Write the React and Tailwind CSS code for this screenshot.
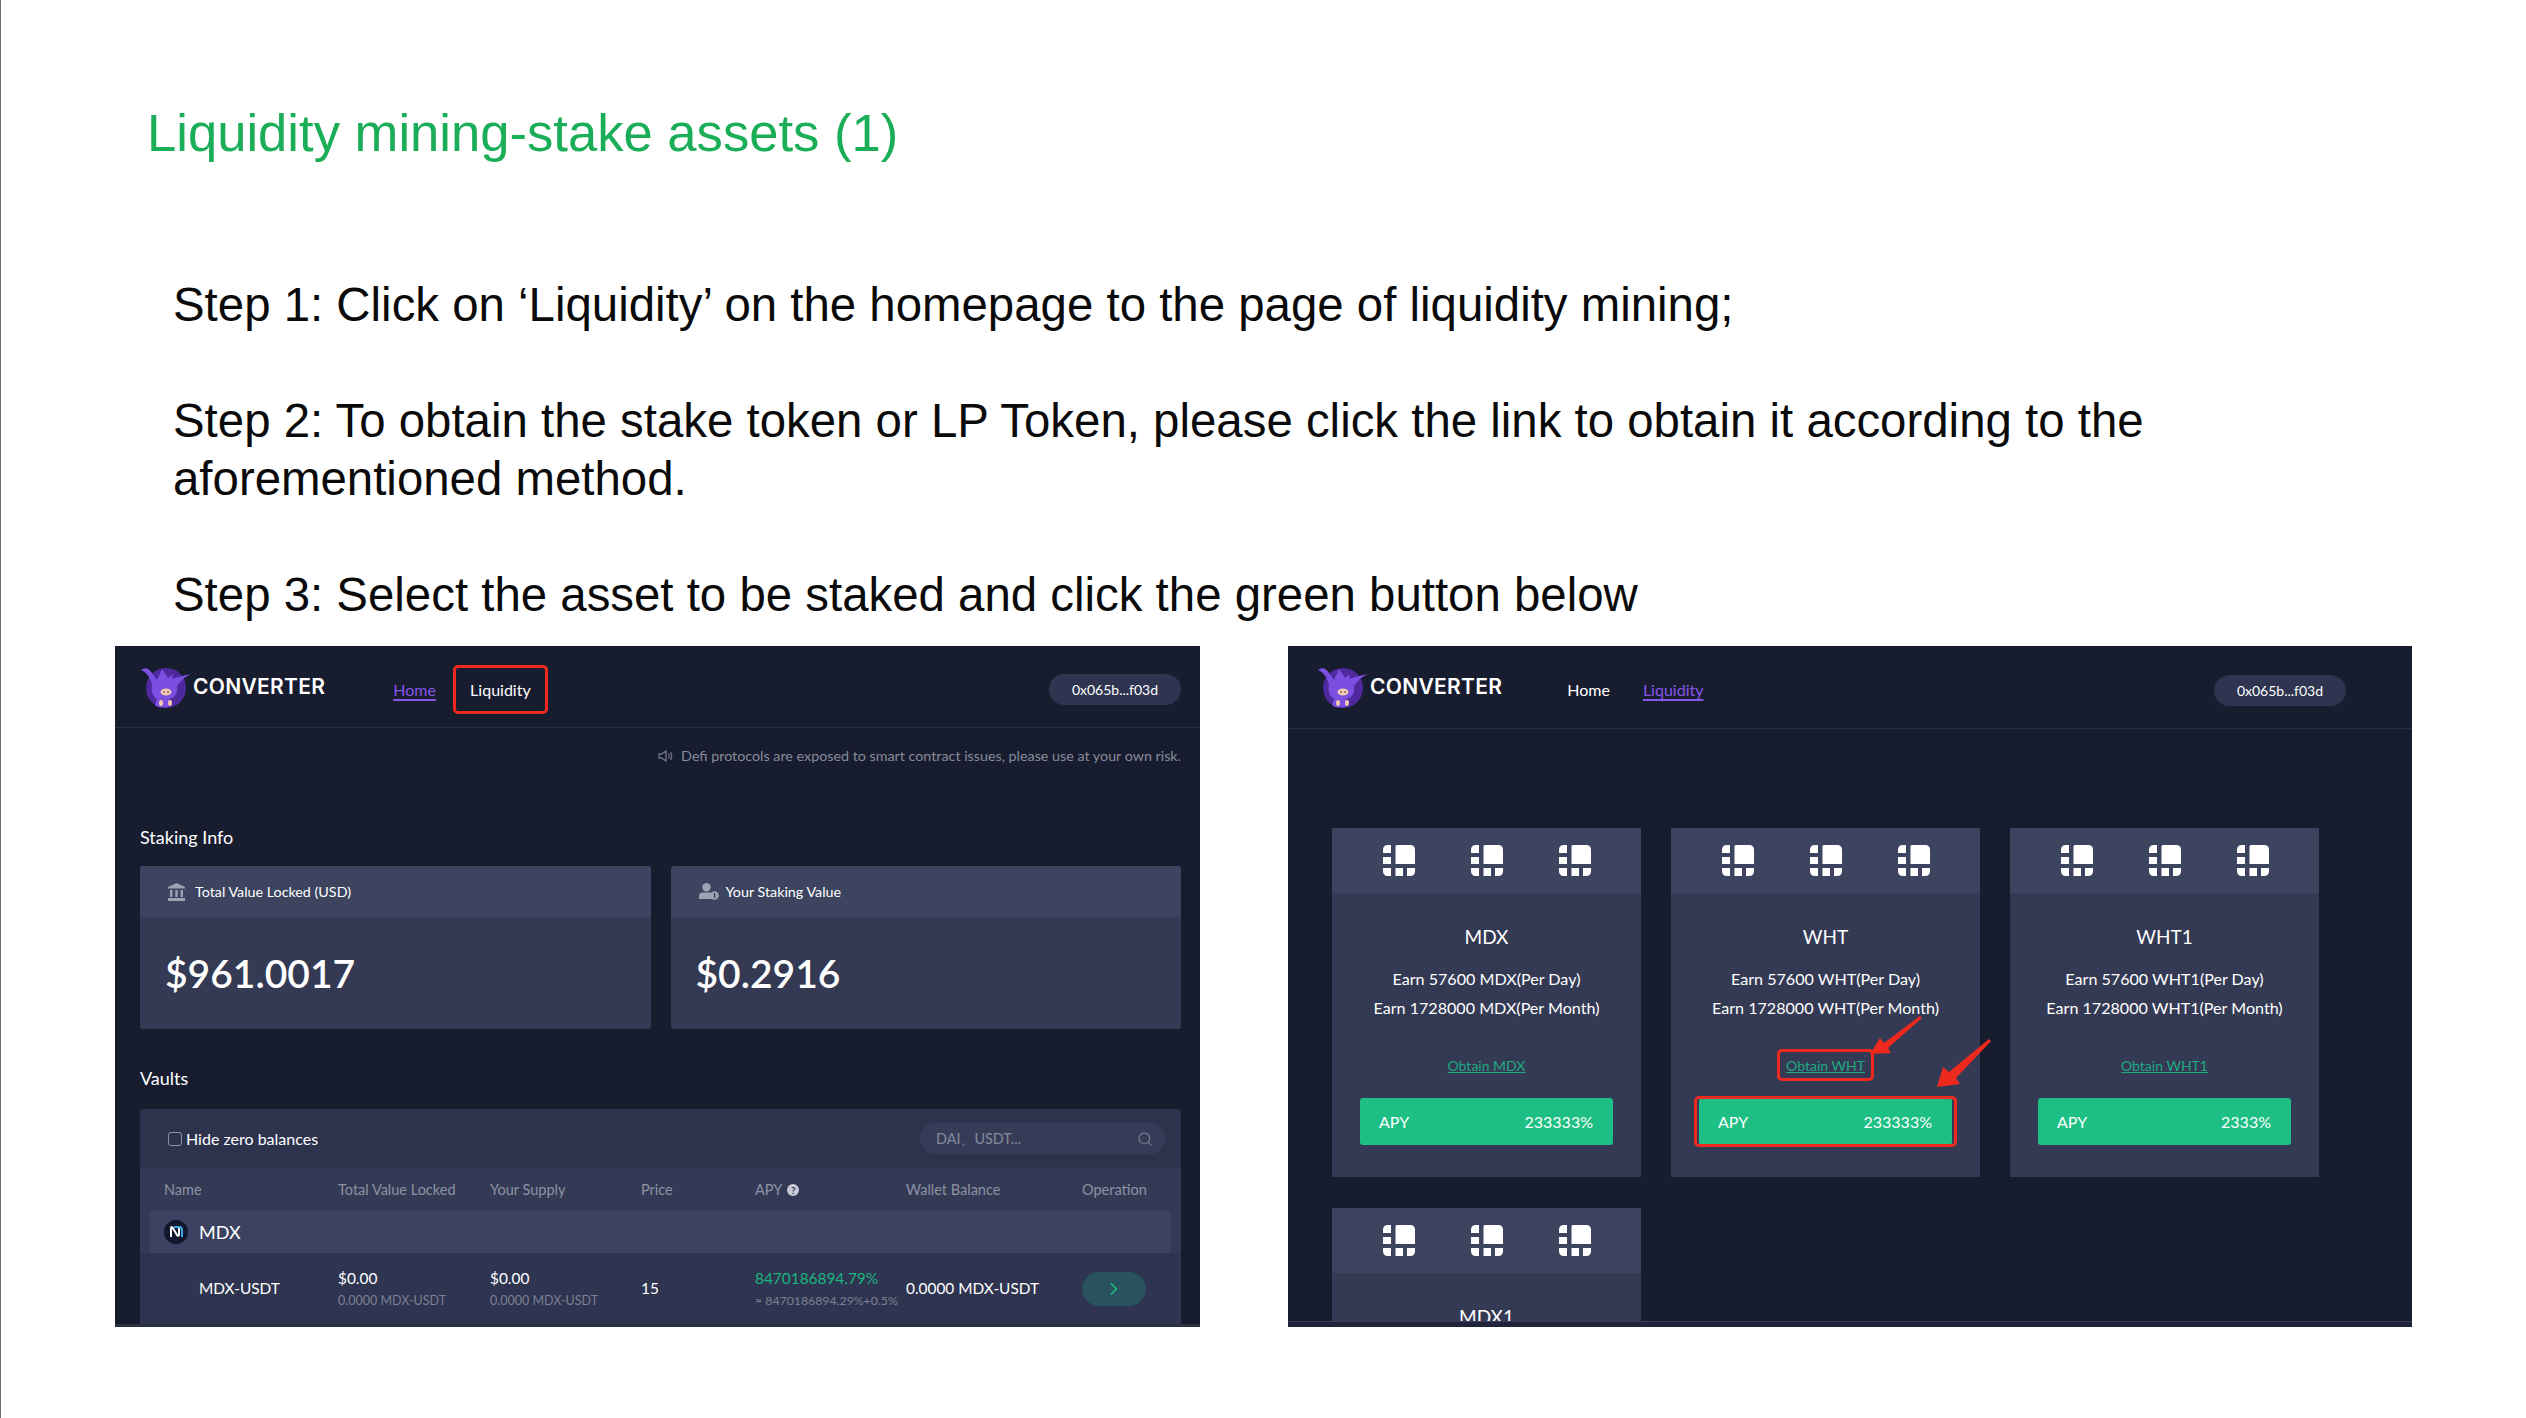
import { ChevronRight, Search } from "lucide-react";

const panelFont = { fontFamily: "Lato, sans-serif" };

// little pig mascot next to the CONVERTER wordmark
const PigLogo = () => (
    <svg width="52" height="41" viewBox="0 0 52 41" className="flex-shrink-0">
        <ellipse cx="26" cy="21" rx="20" ry="20" fill="#4f2a9e" />
        <path d="M1 3 C5 0 9 1 12 6 L17 13 C19 8 21 5 22 2 C24 5 26 7 28 11 L33 7 L32 12 C38 10 45 8 51 7 C46 9 41 13 37 19 C38 26 35 31 29 32 L31 37 C29 41 25 41 23 40 C20 41 17 40 15 38 L17 32 C12 29 11 23 12 17 C10 10 6 5 1 3 Z" fill="#7b4fe0" />
        <ellipse cx="26" cy="25" rx="5.5" ry="3.5" fill="#f0c9b0" />
        <circle cx="24" cy="25" r="0.9" fill="#8a5a60" />
        <circle cx="28" cy="25" r="0.9" fill="#8a5a60" />
        <ellipse cx="21" cy="36" rx="2" ry="3" fill="#f0c9b0" />
        <ellipse cx="30" cy="36" rx="2" ry="3" fill="#f0c9b0" />
    </svg>
);

const BlockIcon = () => (
    <svg width="32" height="31" viewBox="0 0 32 31" fill="#ffffff">
        <path d="M12.5 1.5 Q12.5 0 14 0 H27 Q32 0 32 5 V19 H12.5 Z" />
        <path d="M0 8 V5 Q0 0 5 0 H8 V8 Z" />
        <rect x="0" y="12" width="8" height="7" />
        <path d="M0 23 H8 V31 H5 Q0 31 0 26 Z" />
        <rect x="12.5" y="23" width="7.5" height="8" />
        <path d="M24 23 H32 V26 Q32 31 27 31 H24 Z" />
    </svg>
);

const BankIcon = () => (
    <svg width="17" height="18" viewBox="0 0 17 18" fill="#9ea2b3">
        <path d="M8.5 0 L17 4 V5.5 H0 V4 Z" />
        <rect x="2" y="7" width="2.4" height="7" />
        <rect x="7.3" y="7" width="2.4" height="7" />
        <rect x="12.6" y="7" width="2.4" height="7" />
        <rect x="0" y="15" width="17" height="3" />
    </svg>
);

const UserCoinIcon = () => (
    <svg width="20" height="17" viewBox="0 0 20 17" className="-mr-[3px]">
        <circle cx="7.5" cy="4.2" r="4.2" fill="#9ea2b3" />
        <path d="M0 16 V13 Q0 9.5 4 9.5 H11 Q13 9.5 13 12 V16 Z" fill="#9ea2b3" />
        <circle cx="15.5" cy="12.5" r="4.3" fill="#9ea2b3" />
        <rect x="15" y="10" width="1.2" height="5" fill="#343a54" />
    </svg>
);

const SpeakerIcon = () => (
    <svg width="15" height="12" viewBox="0 0 15 12" fill="none" stroke="#6f7484" strokeWidth="1.3">
        <path d="M1 4 H3.5 L8 1 V11 L3.5 8 H1 Z" />
        <path d="M10.5 3.5 Q12 6 10.5 8.5" />
        <path d="M12.5 2 Q14.8 6 12.5 10" />
    </svg>
);

const MdxIcon = () => (
    <svg width="24" height="24" viewBox="0 0 24 24" fill="none">
        <circle cx="12" cy="12" r="12" fill="#12172e" />
        <path d="M7 17 V8 Q7 6.5 8.5 7.5 L13 15 Q14 16.5 15 15 L15 8" stroke="#ffffff" strokeWidth="2" />
        <path d="M10 7 H15 Q18 7 18 10 V17" stroke="#3ea6e0" strokeWidth="2" />
    </svg>
);

const Logo = () => (
    <div className="flex items-center -mt-[5px]">
        <PigLogo />
        <span
            className="ml-[1px] -mt-[2px] text-[21px] leading-none font-semibold text-white tracking-[0.3px]"
            style={{ fontFamily: "Inter, sans-serif" }}
        >
            CONVERTER
        </span>
    </div>
);

const WalletPill = () => (
    <div className="w-[132px] h-[31px] rounded-full bg-[#2f3550] flex items-center justify-center text-[14px] text-white">
        0x065b...f03d
    </div>
);

const StatCard = ({ icon, label, value }) => (
    <div className="flex-1 h-[163px] rounded-[3px] overflow-hidden bg-[#343a54]">
        <div className="h-[51px] bg-[#3c4460] pl-[28px] flex items-center gap-[10px] text-[14.3px] text-white">
            {icon}
            <span>{label}</span>
        </div>
        <div className="h-[112px] pl-[25px] flex items-center text-[39px] font-semibold text-white">{value}</div>
    </div>
);

function LeftPanel() {
    return (
        <div className="relative w-[1085px] h-[681px] overflow-hidden bg-[#171c2f]" style={panelFont}>
            {/* Nav */}
            <div className="h-[82px] pt-[6px] border-b border-[#2a3044] pl-[25px] pr-[19px] flex items-center">
                <Logo />
                <a className="ml-[68px] text-[16px] text-[#8656e8] underline decoration-2 underline-offset-[3px]">Home</a>
                <div className="ml-[17px] w-[95px] h-[49px] border-[3px] border-[#ee2a1f] rounded-[5px] flex items-center justify-center text-[16px] text-white">
                    Liquidity
                </div>
                <div className="ml-auto">
                    <WalletPill />
                </div>
            </div>

            <div className="pl-[25px] pr-[19px]">
                <div className="mt-[18px] flex items-center justify-end gap-[8px] text-[14.3px] leading-[20px] text-[#878b99]">
                    <SpeakerIcon />
                    <span>Defi protocols are exposed to smart contract issues, please use at your own risk.</span>
                </div>

                <h2 className="mt-[60px] text-[18px] leading-[22px] text-white">Staking Info</h2>
                <div className="mt-[18px] flex gap-[20px]">
                    <StatCard icon={<BankIcon />} label="Total Value Locked (USD)" value="$961.0017" />
                    <StatCard icon={<UserCoinIcon />} label="Your Staking Value" value="$0.2916" />
                </div>

                <h2 className="mt-[38px] text-[18px] leading-[22px] text-white">Vaults</h2>
                <VaultTable />
            </div>

            <div className="absolute left-0 right-0 bottom-0 h-[3px] bg-[#2a2e42]" />
        </div>
    );
}

const cols = "grid grid-cols-[174px_152px_151px_114px_151px_176px_1fr] items-center";

function VaultTable() {
    return (
        <div className="mt-[20px] rounded-t-[3px] bg-[#2e334d] text-white">
            <div className="h-[59px] pl-[28px] pr-[16px] flex items-center justify-between">
                <label className="flex items-center gap-[4px] text-[16px]">
                    <span className="w-[14px] h-[14px] rounded-[3px] border border-[#8e92a3]" />
                    Hide zero balances
                </label>
                <div className="w-[245px] h-[31px] rounded-full bg-[#363c58] pl-[16px] pr-[12px] flex items-center justify-between text-[14.4px] text-[#858a9b]">
                    DAI、USDT...
                    <Search size={16} className="text-[#6f7488]" />
                </div>
            </div>
            <div className={`h-[43px] bg-[#333a55] pl-[24px] text-[14.5px] text-[#8e92a3] ${cols}`}>
                <span>Name</span>
                <span>Total Value Locked</span>
                <span>Your Supply</span>
                <span>Price</span>
                <span className="flex items-center gap-[5px]">
                    APY
                    <span className="w-[12px] h-[12px] rounded-full bg-[#c9ccd6] text-[#2e334d] text-[10px] font-bold leading-[12px] text-center">?</span>
                </span>
                <span>Wallet Balance</span>
                <span>Operation</span>
            </div>
            <div className="h-[114px] bg-[#333a55]">
                <div className="mx-[10px] h-[42px] bg-[#3c4260] pl-[14px] flex items-center gap-[11px] text-[18px]">
                    <MdxIcon />
                    MDX
                </div>
                <div className={`h-[71px] pl-[24px] text-[15.4px] bg-[#2f3550] ${cols}`}>
                    <span className="pl-[35px]">MDX-USDT</span>
                    <div>
                        <div>$0.00</div>
                        <div className="mt-[2px] text-[12.5px] text-[#7c8094]">0.0000 MDX-USDT</div>
                    </div>
                    <div>
                        <div>$0.00</div>
                        <div className="mt-[2px] text-[12.5px] text-[#7c8094]">0.0000 MDX-USDT</div>
                    </div>
                    <span>15</span>
                    <div>
                        <div className="text-[#19b57f]">8470186894.79%</div>
                        <div className="mt-[2px] text-[12.3px] text-[#7c8094] whitespace-nowrap">≈ 8470186894.29%+0.5%</div>
                    </div>
                    <span className="whitespace-nowrap">0.0000 MDX-USDT</span>
                    <div className="w-[64px] h-[34px] rounded-[17px] bg-[#28525e] flex items-center justify-center">
                        <ChevronRight size={20} className="text-[#1ebf84]" />
                    </div>
                </div>
            </div>
        </div>
    );
}

const Pool = ({ name, apy, obtain, marked, cut }) => (
    <div className="h-[349px] bg-[#343a54] text-white text-center">
        <div className="h-[65px] bg-[#3c4460] pl-[51px] pr-[50px] flex items-center justify-between">
            <BlockIcon />
            <BlockIcon />
            <BlockIcon />
        </div>
        <div className="mt-[32px] text-[19px] leading-[24px]">{name}</div>
        {/* the last card runs off the bottom of the screenshot */}
        {!cut && (
            <>
                <div className="mt-[15px] text-[16.1px] leading-[29px]">
                    <div>Earn 57600 {name}(Per Day)</div>
                    <div>Earn 1728000 {name}(Per Month)</div>
                </div>
                <div className="mt-[27px] h-[32px] flex items-center justify-center">
                    <a className={`inline-flex items-center justify-center h-[32px] text-[14px] text-[#1fa97f] underline ${marked ? "w-[97px] border-[3px] border-[#ee2a1f] rounded-[5px]" : ""}`}>
                        {obtain}
                    </a>
                </div>
                <div className="relative mt-[17px] mx-[28px] h-[47px] rounded-[3px] bg-[#1ebf84] pl-[19px] pr-[20px] flex items-center justify-between text-[16px]">
                    <span>APY</span>
                    <span>{apy}</span>
                    {marked && <div className="absolute -inset-x-[5px] -inset-y-[2px] border-[3px] border-[#ee2a1f] rounded-[5px]" />}
                </div>
            </>
        )}
    </div>
);

function RightPanel() {
    return (
        <div className="relative w-[1124px] h-[681px] overflow-hidden bg-[#171c2f]" style={panelFont}>
            {/* Nav */}
            <div className="h-[83px] pt-[6px] border-b border-[#2a3044] pl-[29px] pr-[66px] flex items-center">
                <Logo />
                <a className="ml-[65px] text-[16px] text-white">Home</a>
                <a className="ml-[33px] text-[16px] text-[#8656e8] underline decoration-2 underline-offset-[3px]">Liquidity</a>
                <div className="ml-auto">
                    <WalletPill />
                </div>
            </div>

            <div className="mt-[99px] pl-[44px] grid grid-cols-[309px_309px_309px] gap-x-[30px] gap-y-[31px]">
                <Pool name="MDX" apy="233333%" obtain="Obtain MDX" />
                <Pool name="WHT" apy="233333%" obtain="Obtain WHT" marked />
                <Pool name="WHT1" apy="2333%" obtain="Obtain WHT1" />
                <Pool name="MDX1" cut />
            </div>

            {/* Red arrows drawn over the screenshot */}
            <svg className="absolute left-0 top-0 pointer-events-none" width="1124" height="681" fill="#ee2a1f">
                <path d="M582 408 L592 392 L596 397 L632 370 L634 372 L600 402 L603 407 Z" />
                <path d="M649 441 L655 421 L661 426 L701 393 L703 395 L668 432 L672 438 Z" />
            </svg>

            <div className="absolute left-0 right-0 bottom-0 h-[6px] bg-[#20243a] border-t border-[#3a3f55]" />
        </div>
    );
}

export default function App() {
    return (
        <div className="w-[2526px] h-[1418px] bg-white overflow-hidden border-l border-[#6e6e6e]" style={{ fontFamily: '"Liberation Sans", sans-serif' }}>
            <h1 className="pl-[146px] pt-[98px] text-[52.6px] leading-[70px] text-[#1bae58]">
                Liquidity mining-stake assets (1)
            </h1>
            <div className="mt-[108px] pl-[172px] w-[2300px] text-[47.4px] leading-[58px] text-[#0a0a0a]">
                <p>Step 1: Click on ‘Liquidity’ on the homepage to the page of liquidity mining;</p>
                <p className="mt-[58px]">Step 2: To obtain the stake token or LP Token, please click the link to obtain it according to the aforementioned method.</p>
                <p className="mt-[58px]">Step 3: Select the asset to be staked and click the green button below</p>
            </div>
            <div className="mt-[22px] pl-[114px] flex gap-[88px]">
                <LeftPanel />
                <RightPanel />
            </div>
        </div>
    );
}
